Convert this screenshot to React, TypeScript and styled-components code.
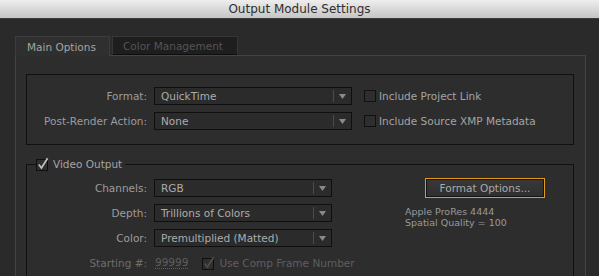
import React from "react";
import styled, { createGlobalStyle } from "styled-components";

const GlobalStyle = createGlobalStyle`
  html, body {
    margin: 0;
    padding: 0;
    background: #2a2a2a;
  }
  body {
    font-family: "DejaVu Sans", "Liberation Sans", sans-serif;
    font-size: 10px;
  }
`;

const Window = styled.div`
  width: 599px;
  height: 276px;
  overflow: hidden;
  background: #2a2a2a;
  display: flex;
  flex-direction: column;
`;

const TitleBar = styled.div`
  flex: none;
  height: 18px;
  display: flex;
  align-items: center;
  justify-content: center;
  background: linear-gradient(#eeeeee, #c5c5c5);
  border-bottom: 1px solid #3c3c3c;
  color: #2f2f2f;
  font-size: 12px;
`;

const Body = styled.div`
  flex: 1;
  display: flex;
  flex-direction: column;
  padding: 17px 13px 0 15px;
`;

const TabRow = styled.div`
  display: flex;
  align-items: flex-start;
  gap: 2px;
  height: 19px;
`;

const Tab = styled.div<{ $active?: boolean; $width: number }>`
  position: relative;
  z-index: 1;
  box-sizing: border-box;
  width: ${(p) => p.$width}px;
  height: ${(p) => (p.$active ? "20px" : "19px")};
  padding-left: ${(p) => (p.$active ? "11px" : "10px")};
  display: flex;
  align-items: center;
  background: ${(p) => (p.$active ? "#2f2f2f" : "#1e1e1e")};
  border: 1px solid ${(p) => (p.$active ? "#3d3d3d" : "#363636")};
  border-bottom: ${(p) => (p.$active ? "none" : "1px solid #0e0e0e")};
  color: ${(p) => (p.$active ? "#a4a4a4" : "#555555")};
  font-size: 10.5px;
  white-space: nowrap;
`;

const Panel = styled.div`
  flex: 1;
  background: #2d2d2d;
  border: 1px solid #434343;
  border-bottom: none;
  padding: 18px 11px 0 10px;
`;

const Box = styled.div`
  border: 1px solid #111111;
  padding: 12px 0 14px 0;
  display: flex;
  flex-direction: column;
  gap: 7px;
`;

const Group = styled.fieldset`
  margin: 12px 0 0 0;
  padding: 8px 0 20px 0;
  border: 1px solid #111111;
  border-bottom: none;
  min-width: 0;
`;

const Legend = styled.legend`
  margin-left: 9px;
  padding: 0 3px 0 0;
  display: flex;
  align-items: center;
  gap: 3px;
  color: #a4a4a4;
  font-size: 10.5px;
`;

const GroupBody = styled.div`
  display: flex;
  align-items: flex-start;
`;

const Column = styled.div`
  width: 305px;
  flex: none;
  display: flex;
  flex-direction: column;
  gap: 7px;
`;

const Row = styled.div`
  display: flex;
  align-items: center;
  height: 18px;
`;

const Label = styled.div<{ $dim?: boolean }>`
  width: 120px;
  flex: none;
  margin-right: 7px;
  text-align: right;
  color: ${(p) => (p.$dim ? "#6e6e6e" : "#9c9c9c")};
  font-size: 10.5px;
  white-space: nowrap;
`;

const Select = styled.div<{ $width: number }>`
  box-sizing: border-box;
  flex: none;
  width: ${(p) => p.$width}px;
  height: 18px;
  border: 1px solid #0f0f0f;
  background: #2b2b2b;
  display: flex;
  align-items: center;
  color: #ababab;
  font-size: 10.5px;
`;

const SelectValue = styled.div`
  flex: 1;
  padding-left: 6px;
  white-space: nowrap;
`;

const SelectArrow = styled.div`
  width: 17px;
  height: 12px;
  border-left: 1px solid #4a4a4a;
  display: flex;
  align-items: center;
  justify-content: center;
`;

const CheckField = styled.div<{ $dim?: boolean; $gap?: number }>`
  display: flex;
  align-items: center;
  gap: 3px;
  margin-left: ${(p) => p.$gap ?? 12}px;
  color: ${(p) => (p.$dim ? "#5f5f5f" : "#a4a4a4")};
  font-size: 10.5px;
  white-space: nowrap;
`;

const Box12 = styled.div`
  width: 12px;
  height: 12px;
  box-sizing: border-box;
  border: 1px solid #101010;
  background: #2e2e2e;
`;

const Number = styled.span`
  color: #5e5e5e;
  border-bottom: 1px dotted #5e5e5e;
  margin-left: 1px;
  line-height: 11px;
  font-size: 10.5px;
`;

const Side = styled.div`
  margin-left: 73px;
  margin-top: -1px;
  display: flex;
  flex-direction: column;
`;

const Button = styled.div`
  box-sizing: border-box;
  width: 120px;
  height: 20px;
  margin-left: 20px;
  border: 1px solid #e59a1c;
  box-shadow: inset 0 0 0 1px #141414;
  background: linear-gradient(#383838, #2f2f2f);
  display: flex;
  align-items: center;
  justify-content: center;
  color: #a9a9a9;
  font-size: 10.5px;
`;

const Info = styled.div`
  margin-top: 8px;
  color: #9a9a9a;
  font-size: 9.5px;
  line-height: 11px;
  white-space: nowrap;
`;

function Arrow() {
  return (
    <svg width="7" height="5" viewBox="0 0 7 5">
      <path d="M0 0 H7 L3.5 5 Z" fill="#8a8a8a" />
    </svg>
  );
}

function Checked({ dim }: { dim?: boolean }) {
  const c = dim ? "#4e4e4e" : "#c2c2c2";
  return (
    <svg width="14" height="14" viewBox="0 0 14 14">
      <rect x="0.5" y="2.5" width="11" height="11" fill="#2e2e2e" stroke="#0f0f0f" />
      <path d="M2.8 7.6 L5.4 11 L11.6 1.2" fill="none" stroke={c} strokeWidth="1.7" />
    </svg>
  );
}

function Dropdown({ value, width }: { value: string; width: number }) {
  return (
    <Select $width={width}>
      <SelectValue>{value}</SelectValue>
      <SelectArrow>
        <Arrow />
      </SelectArrow>
    </Select>
  );
}

export default function App() {
  return (
    <Window>
      <GlobalStyle />
      <TitleBar>Output Module Settings</TitleBar>
      <Body>
        <TabRow>
          <Tab $active $width={95}>Main Options</Tab>
          <Tab $width={126}>Color Management</Tab>
        </TabRow>
        <Panel>
          <Box>
            <Row>
              <Label>Format:</Label>
              <Dropdown value="QuickTime" width={198} />
              <CheckField>
                <Box12 />
                Include Project Link
              </CheckField>
            </Row>
            <Row>
              <Label>Post-Render Action:</Label>
              <Dropdown value="None" width={198} />
              <CheckField>
                <Box12 />
                Include Source XMP Metadata
              </CheckField>
            </Row>
          </Box>

          <Group>
            <Legend>
              <Checked />
              Video Output
            </Legend>
            <GroupBody>
              <Column>
                <Row>
                  <Label>Channels:</Label>
                  <Dropdown value="RGB" width={178} />
                </Row>
                <Row>
                  <Label>Depth:</Label>
                  <Dropdown value="Trillions of Colors" width={178} />
                </Row>
                <Row>
                  <Label>Color:</Label>
                  <Dropdown value="Premultiplied (Matted)" width={178} />
                </Row>
                <Row>
                  <Label $dim>Starting #:</Label>
                  <Number>99999</Number>
                  <CheckField $dim $gap={14}>
                    <Checked dim />
                    Use Comp Frame Number
                  </CheckField>
                </Row>
              </Column>
              <Side>
                <Button>Format Options...</Button>
                <Info>
                  Apple ProRes 4444
                  <br />
                  Spatial Quality = 100
                </Info>
              </Side>
            </GroupBody>
          </Group>
        </Panel>
      </Body>
    </Window>
  );
}
